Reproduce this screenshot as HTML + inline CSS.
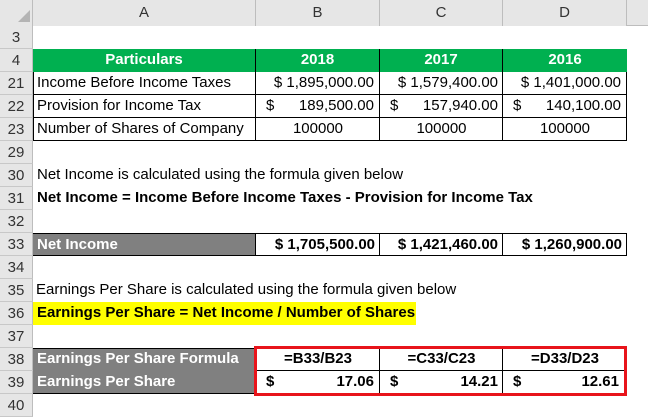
<!DOCTYPE html><html><head><style>
body{margin:0;width:648px;height:416px;overflow:hidden;background:#fff;font-family:"Liberation Sans",sans-serif;font-size:15px;color:#000;position:relative}
div{position:absolute;box-sizing:border-box;white-space:nowrap}
.hd{background:#e6e6e6;color:#333;text-align:center}
.rn{left:0;width:33px;height:23px;line-height:23px;text-align:center;background:#e6e6e6;color:#333;border-bottom:1px solid #c8c8c8;border-right:1px solid #bdbdbd;font-size:15px}
.c{height:23px;line-height:22px;padding:0 4px}
.b{font-weight:bold}
.bd{border:1px solid #000}
</style></head><body>
<div class="hd" style="left:0;top:0;width:648px;height:26px;border-bottom:1px solid #bdbdbd"></div>
<div style="left:0;top:0;width:33px;height:26px;background:#e6e6e6;border-right:1px solid #bdbdbd"></div>
<div style="left:18px;top:10px;width:0;height:0;border-left:12px solid transparent;border-bottom:12px solid #b4b4b4"></div>
<div class="hd" style="left:33px;top:0;width:223px;height:26px;line-height:26px;border-right:1px solid #bdbdbd;font-size:15px">A</div>
<div class="hd" style="left:256px;top:0;width:124px;height:26px;line-height:26px;border-right:1px solid #bdbdbd;font-size:15px">B</div>
<div class="hd" style="left:380px;top:0;width:123px;height:26px;line-height:26px;border-right:1px solid #bdbdbd;font-size:15px">C</div>
<div class="hd" style="left:503px;top:0;width:124px;height:26px;line-height:26px;border-right:1px solid #bdbdbd;font-size:15px">D</div>

<div class="rn" style="top:26px">3</div><div class="rn" style="top:49px">4</div><div class="rn" style="top:72px">21</div><div class="rn" style="top:95px">22</div><div class="rn" style="top:118px">23</div><div class="rn" style="top:141px">29</div><div class="rn" style="top:164px">30</div><div class="rn" style="top:187px">31</div><div class="rn" style="top:210px">32</div><div class="rn" style="top:233px">33</div><div class="rn" style="top:256px">34</div><div class="rn" style="top:279px">35</div><div class="rn" style="top:302px">36</div><div class="rn" style="top:325px">37</div><div class="rn" style="top:348px">38</div><div class="rn" style="top:371px">39</div><div class="rn" style="top:394px">40</div>

<div style="left:33px;top:49px;width:594px;height:23px;background:#00b050"></div>
<div class="c b" style="left:33px;top:49px;width:223px;text-align:center;color:#fff;border-right:1px solid #000">Particulars</div>
<div class="c b" style="left:256px;top:49px;width:124px;text-align:center;color:#fff;border-right:1px solid #000">2018</div>
<div class="c b" style="left:380px;top:49px;width:123px;text-align:center;color:#fff;border-right:1px solid #000">2017</div>
<div class="c b" style="left:503px;top:49px;width:124px;text-align:center;color:#fff">2016</div>
<div style="left:33px;top:72px;width:594px;height:69px;border:1px solid #000;border-top:none"></div>
<div style="left:33px;top:94px;width:594px;height:1px;background:#000"></div>
<div style="left:33px;top:117px;width:594px;height:1px;background:#000"></div>
<div style="left:255px;top:49px;width:1px;height:92px;background:#000"></div>
<div style="left:379px;top:49px;width:1px;height:92px;background:#000"></div>
<div style="left:502px;top:49px;width:1px;height:92px;background:#000"></div>
<div class="c" style="left:33px;top:72px">Income Before Income Taxes</div>
<div class="c" style="left:33px;top:95px">Provision for Income Tax</div>
<div class="c" style="left:33px;top:118px">Number of Shares of Company</div>
<div class="c" style="left:258px;top:72px;width:120px;text-align:right">$ 1,895,000.00</div>
<div class="c" style="left:382px;top:72px;width:120px;text-align:right">$ 1,579,400.00</div>
<div class="c" style="left:505px;top:72px;width:120px;text-align:right">$ 1,401,000.00</div>
<div class="c" style="left:262px;top:95px">$</div><div class="c" style="left:258px;top:95px;width:120px;text-align:right">189,500.00</div>
<div class="c" style="left:386px;top:95px">$</div><div class="c" style="left:382px;top:95px;width:120px;text-align:right">157,940.00</div>
<div class="c" style="left:509px;top:95px">$</div><div class="c" style="left:505px;top:95px;width:120px;text-align:right">140,100.00</div>
<div class="c" style="left:256px;top:118px;width:124px;text-align:center">100000</div>
<div class="c" style="left:380px;top:118px;width:123px;text-align:center">100000</div>
<div class="c" style="left:503px;top:118px;width:124px;text-align:center">100000</div>

<div class="c" style="left:33px;top:164px">Net Income is calculated using the formula given below</div>
<div class="c b" style="left:33px;top:187px">Net Income = Income Before Income Taxes - Provision for Income Tax</div>

<div class="c b" style="left:33px;top:233px;width:223px;background:#808080;color:#fff;border-top:1px solid #000;border-bottom:1px solid #000">Net Income</div>
<div class="c b bd" style="left:255px;top:233px;width:125px;text-align:right">$ 1,705,500.00</div>
<div class="c b bd" style="left:379px;top:233px;width:124px;text-align:right">$ 1,421,460.00</div>
<div class="c b bd" style="left:502px;top:233px;width:125px;text-align:right">$ 1,260,900.00</div>

<div class="c" style="left:32px;top:279px">Earnings Per Share is calculated using the formula given below</div>
<div class="c b" style="left:33px;top:302px;width:383px;background:#ffff00">Earnings Per Share = Net Income / Number of Shares</div>

<div style="left:33px;top:348px;width:223px;height:46px;background:#808080;border-top:1px solid #000;border-bottom:1px solid #000"></div>
<div class="c b" style="left:33px;top:348px;color:#fff">Earnings Per Share Formula</div>
<div class="c b" style="left:33px;top:371px;color:#fff">Earnings Per Share</div>
<div style="left:255px;top:370px;width:372px;height:1px;background:#000"></div>
<div style="left:379px;top:348px;width:1px;height:46px;background:#000"></div>
<div style="left:502px;top:348px;width:1px;height:46px;background:#000"></div>
<div class="c b" style="left:256px;top:348px;width:124px;text-align:center">=B33/B23</div>
<div class="c b" style="left:380px;top:348px;width:123px;text-align:center">=C33/C23</div>
<div class="c b" style="left:503px;top:348px;width:124px;text-align:center">=D33/D23</div>
<div class="c b" style="left:262px;top:371px">$</div><div class="c b" style="left:258px;top:371px;width:120px;text-align:right">17.06</div>
<div class="c b" style="left:386px;top:371px">$</div><div class="c b" style="left:382px;top:371px;width:120px;text-align:right">14.21</div>
<div class="c b" style="left:509px;top:371px">$</div><div class="c b" style="left:505px;top:371px;width:118px;text-align:right">12.61</div>
<div style="left:254px;top:346px;width:373px;height:50px;border:3px solid #e8141b"></div>
</body></html>
